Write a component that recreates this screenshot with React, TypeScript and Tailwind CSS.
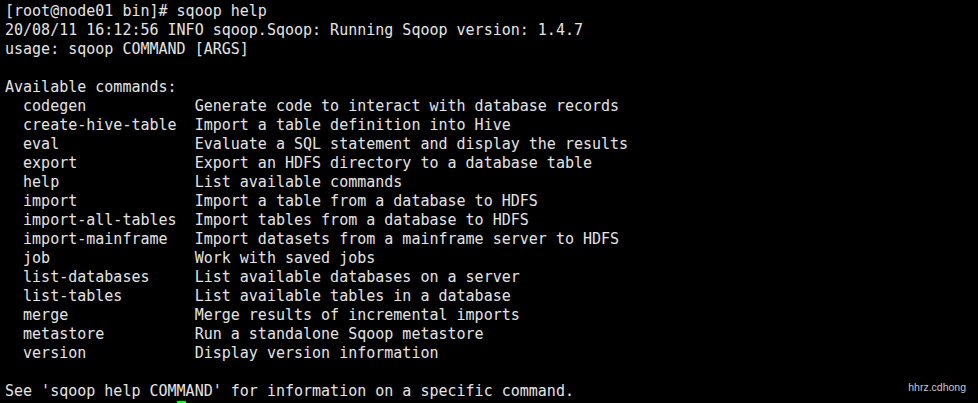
export default function App() {
  const cmds: [string, string][] = [
    ["codegen", "Generate code to interact with database records"],
    ["create-hive-table", "Import a table definition into Hive"],
    ["eval", "Evaluate a SQL statement and display the results"],
    ["export", "Export an HDFS directory to a database table"],
    ["help", "List available commands"],
    ["import", "Import a table from a database to HDFS"],
    ["import-all-tables", "Import tables from a database to HDFS"],
    ["import-mainframe", "Import datasets from a mainframe server to HDFS"],
    ["job", "Work with saved jobs"],
    ["list-databases", "List available databases on a server"],
    ["list-tables", "List available tables in a database"],
    ["merge", "Merge results of incremental imports"],
    ["metastore", "Run a standalone Sqoop metastore"],
    ["version", "Display version information"],
  ];
  const lines: string[] = [
    "[root@node01 bin]# sqoop help",
    "20/08/11 16:12:56 INFO sqoop.Sqoop: Running Sqoop version: 1.4.7",
    "usage: sqoop COMMAND [ARGS]",
    "",
    "Available commands:",
    ...cmds.map(([c, d]) => "  " + c.padEnd(18, " ") + " " + d),
    "",
    "See 'sqoop help COMMAND' for information on a specific command.",
  ];
  return (
    <div className="relative w-[978px] h-[403px] overflow-hidden bg-black">
      <pre className="m-0 pl-[5px] pt-[2px] text-[15px] leading-[19px] text-[#e4e4e4] font-['DejaVu_Sans_Mono',monospace] whitespace-pre">
        {lines.map((l, i) => (
          <div key={i} className="h-[19px]">{l}</div>
        ))}
        <div className="h-[19px]">
          <span className="invisible">{"[root@node01 bin]# "}</span>
          <span className="inline-block w-[9px] h-[19px] bg-[#00ff00] align-top"></span>
        </div>
      </pre>
      <div className="absolute right-[12px] top-[380px] whitespace-nowrap text-[10.5px] leading-[14px] text-[#c8c8c8] font-['Liberation_Sans',sans-serif]">
        hhrz.cdhong
      </div>
    </div>
  );
}
